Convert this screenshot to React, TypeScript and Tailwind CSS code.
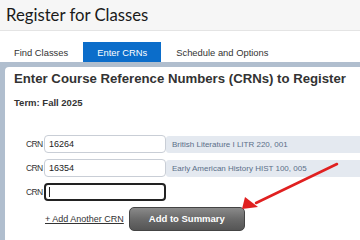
const rows = [
  { crn: '16264', title: 'British Literature I LITR 220, 001' },
  { crn: '16354', title: 'Early American History HIST 100, 005' },
];

const App = () => {
  return (
    <div className="relative w-[360px] h-[240px] overflow-hidden bg-white font-['Liberation_Sans',Arial,sans-serif]">
      <header className="h-[31px] bg-[#f6f6f6] border-b border-[#e4e4e4] pl-[6px] pt-[3px]">
        <h1 className="text-[16.7px] leading-[24px] text-[#1a1a1a] font-['Lato',sans-serif]">Register for Classes</h1>
      </header>

      <nav className="flex items-end h-[31px] pl-[9px] text-[9.4px] text-[#333]">
        <span className="px-[5px] h-[20px] leading-[22px]">Find Classes</span>
        <span className="ml-[10px] w-[78px] h-[20px] leading-[22px] text-center bg-[#0b6dca] text-white">Enter CRNs</span>
        <span className="ml-[15px] h-[20px] leading-[22px]">Schedule and Options</span>
      </nav>

      <div className="bg-[#b0bece] pt-[5px] pl-[5px] h-[178px]">
        <section className="bg-white h-full rounded-tl-[4px] pl-[9px] pt-[3px]">
          <h2 className="text-[13.2px] font-bold text-[#333] leading-[18px] whitespace-nowrap">
            Enter Course Reference Numbers (CRNs) to Register
          </h2>
          <p className="mt-[8px] text-[9.5px] font-bold text-[#333]">Term: Fall 2025</p>

          <div className="mt-[25px] flex flex-col gap-[6px] pl-[12px]">
            {rows.map((r) => (
              <div key={r.crn} className="flex items-center h-[18px]">
                <span className="w-[18px] text-[8.5px] tracking-[-0.6px] text-[#333]">CRN</span>
                <div className="w-[122px] h-[18px] border border-[#c9ced6] rounded-[4px] px-[4px] text-[9px] leading-[16px] text-[#222]">
                  {r.crn}
                </div>
                <div className="flex-1 h-[17px] bg-[#e4e9f0] rounded-l-[3px] pl-[6px] text-[8px] leading-[17px] text-[#5b6f88]">
                  {r.title}
                </div>
              </div>
            ))}
            <div className="flex items-center h-[18px]">
              <span className="w-[18px] text-[8.5px] tracking-[-0.6px] text-[#333]">CRN</span>
              <div className="w-[122px] h-[18px] border-2 border-[#222] rounded-[4px] px-[3px] flex items-center">
                <span className="w-px h-[10px] bg-[#222]" />
              </div>
            </div>
          </div>

          <div className="flex items-center mt-[6px] pl-[31px]">
            <a className="text-[9px] text-[#333] underline">+ Add Another CRN</a>
            <button className="ml-[5px] w-[116px] h-[24px] rounded-[5px] border border-[#444] bg-gradient-to-b from-[#8a8a8a] via-[#6a6a6a] to-[#555] text-white text-[9.5px] font-bold">
              Add to Summary
            </button>
          </div>
        </section>
      </div>

      <svg className="absolute left-0 top-0" width="360" height="240" viewBox="0 0 360 240">
        <line x1="337" y1="164" x2="256" y2="203" stroke="#e02020" strokeWidth="2.5" strokeLinecap="round" />
        <polygon points="242,209 245,197 258,207" fill="#e02020" />
      </svg>
    </div>
  );
};

export default App;
